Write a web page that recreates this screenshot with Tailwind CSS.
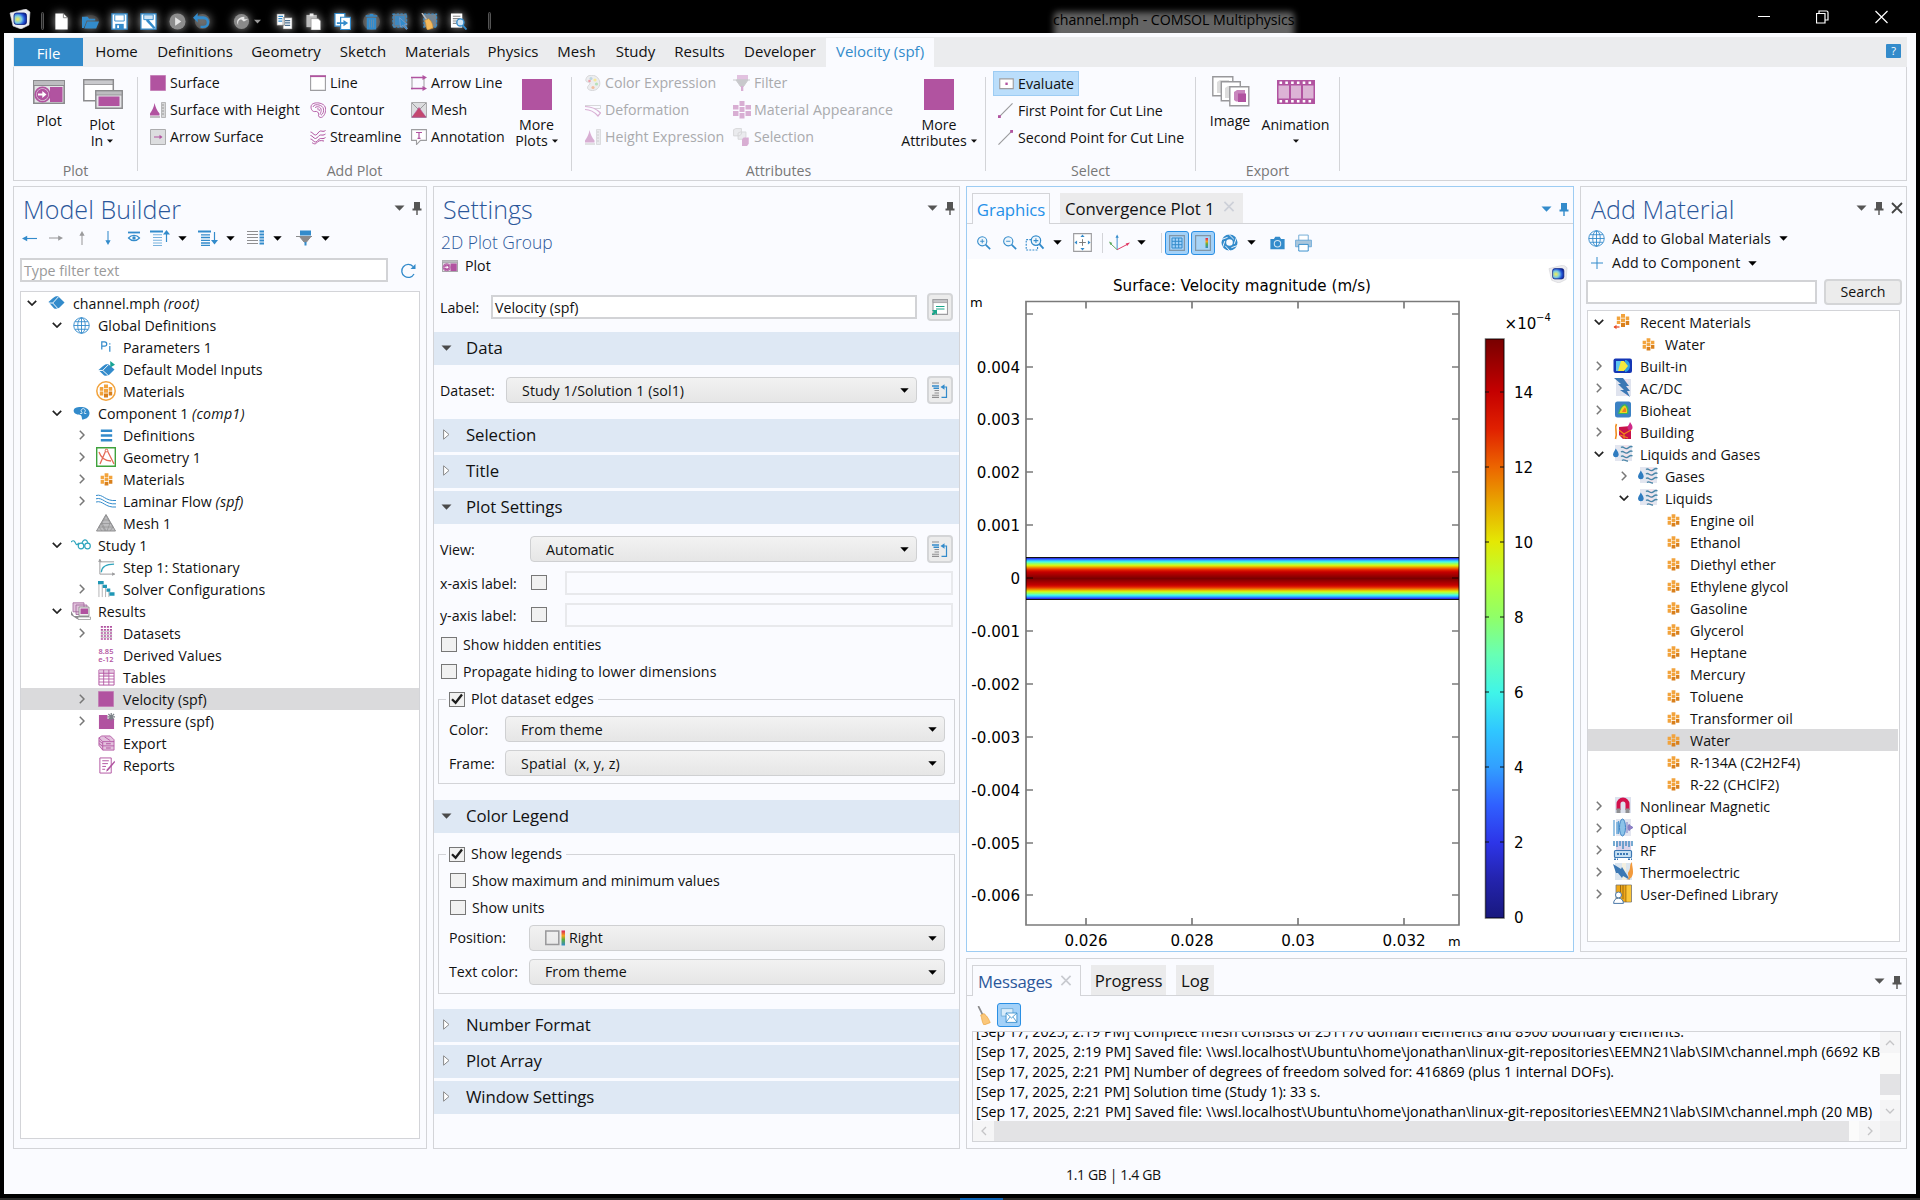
<!DOCTYPE html>
<html lang="en">
<head>
<meta charset="utf-8">
<title>channel.mph - COMSOL Multiphysics</title>
<script src="https://cdn.jsdelivr.net/npm/@tailwindcss/browser@4"></script>
</head>
<body class="bg-black">
<svg class="absolute h-0 w-0" xmlns="http://www.w3.org/2000/svg">
<defs>
<linearGradient id="jet" x1="0" y1="1" x2="0" y2="0"><stop offset="0" stop-color="#18187e"/><stop offset=".07" stop-color="#2424b0"/><stop offset=".13" stop-color="#2d35e8"/><stop offset=".195" stop-color="#3060ff"/><stop offset=".26" stop-color="#329fff"/><stop offset=".325" stop-color="#30c8ff"/><stop offset=".39" stop-color="#40f5e8"/><stop offset=".455" stop-color="#68ffb4"/><stop offset=".52" stop-color="#90ff68"/><stop offset=".585" stop-color="#b8ff38"/><stop offset=".65" stop-color="#e4e804"/><stop offset=".715" stop-color="#e8a800"/><stop offset=".78" stop-color="#ec6400"/><stop offset=".845" stop-color="#e02000"/><stop offset=".91" stop-color="#c40000"/><stop offset="1" stop-color="#780000"/></linearGradient>
<linearGradient id="flowProfile" x1="0" y1="0" x2="0" y2=".5" spreadMethod="reflect"><stop offset="0" stop-color="#18187e"/><stop offset=".068" stop-color="#2d35e8"/><stop offset=".102" stop-color="#3060ff"/><stop offset=".14" stop-color="#329fff"/><stop offset=".178" stop-color="#30c8ff"/><stop offset=".218" stop-color="#40f5e8"/><stop offset=".262" stop-color="#68ffb4"/><stop offset=".306" stop-color="#90ff68"/><stop offset=".356" stop-color="#b8ff38"/><stop offset=".408" stop-color="#e4e804"/><stop offset=".466" stop-color="#e8a800"/><stop offset=".53" stop-color="#ec6400"/><stop offset=".606" stop-color="#e02000"/><stop offset=".698" stop-color="#c40000"/><stop offset="1" stop-color="#7a0000"/></linearGradient>
<linearGradient id="rain" x1="0" y1="0" x2="0" y2="1"><stop offset="0" stop-color="#d81e5b"/><stop offset=".35" stop-color="#f6a11c"/><stop offset=".6" stop-color="#5fae3a"/><stop offset="1" stop-color="#338bcb"/></linearGradient>
<radialGradient id="logoG" cx=".3" cy=".55" r=".75"><stop offset="0" stop-color="#f6ee54"/><stop offset=".4" stop-color="#7ccce0"/><stop offset=".7" stop-color="#2458d8"/><stop offset="1" stop-color="#0b1c8c"/></radialGradient>

<symbol id="dd" viewBox="0 0 10 6"><path d="M0 .4h10L5 5.8z" fill="currentColor"/></symbol>
<symbol id="pin" viewBox="0 0 10 13"><path d="M2 0h6v6.5h1.5v2H5.7V13H4.3V8.500H.5v-2H2z" fill="currentColor"/></symbol>
<symbol id="cross" viewBox="0 0 12 12"><path d="M1 1l10 10M11 1L1 11" stroke="currentColor" stroke-width="1.8" fill="none"/></symbol>
<symbol id="open" viewBox="0 0 10 6"><path d="M.8 .8L5 5l4.200-4.200" stroke="#222" stroke-width="1.700" fill="none"/></symbol>
<symbol id="shut" viewBox="0 0 6 10"><path d="M.8 .8L5 5 .8 9.200" stroke="#777" stroke-width="1.500" fill="none"/></symbol>
<symbol id="check" viewBox="0 0 12 12"><path d="M1 6.200l3.600 3.600L11 1.500" stroke="#1c1c1c" stroke-width="2.300" fill="none"/></symbol>

<symbol id="logo" viewBox="0 0 22 20"><path d="M1 4L17 0l4 3-1 13-8 4-8-3z" fill="#ececef" stroke="#cfcfd3" stroke-width=".6"/><rect x="5" y="4" width="12.500" height="11.500" rx="2.500" fill="url(#logoG)" stroke="#0d1f7c" stroke-width=".8"/></symbol>
<symbol id="doc" viewBox="0 0 18 18"><path d="M2.500.5h8.500l4.500 4.500v12.500h-13z" fill="#fff"/><path d="M11 .5V5h4.500" fill="none" stroke="#777" stroke-width=".9"/></symbol>
<symbol id="folder" viewBox="0 0 18 18"><ellipse cx="9" cy="9" rx="9" ry="7" fill="#555" opacity=".5"/><path d="M0 4h6l1.500 2H14v2H5l-3 8H0zM5.500 9H18l-3 7.500H2.500z" fill="#338bcb"/></symbol>
<symbol id="save" viewBox="0 0 18 18"><path d="M1 1h16v16H1z" fill="#fff" stroke="#338bcb" stroke-width="1.400"/><path d="M4 2h10v6.500H4z" fill="#fff" stroke="#338bcb"/><path d="M4.500 11.500h9V17h-9z" fill="#338bcb"/><path d="M6.500 13h2v3h-2z" fill="#fff"/></symbol>
<symbol id="saveas" viewBox="0 0 18 18"><path d="M1 1h16v16H1z" fill="#fff" stroke="#338bcb" stroke-width="1.300"/><path d="M4 2h10v5H4z" fill="#cfe3f3" stroke="#338bcb"/><path d="M6 8l3-1 7.500 8.500-2 1.500z" fill="#338bcb"/></symbol>
<symbol id="play" viewBox="0 0 18 18"><circle cx="9" cy="9" r="8.500" fill="#8d8d8d"/><path d="M6.500 4.500l6.500 4.500-6.500 4.500z" fill="#e4e4e4"/></symbol>
<symbol id="undo" viewBox="0 0 18 18"><circle cx="10" cy="9" r="8" fill="#777" opacity=".6"/><path d="M5 0v3.500h6a5.800 5.800 0 010 12.500H8v-2.500h3a3.300 3.300 0 000-7H5V10L0 5z" fill="#338bcb"/></symbol>
<symbol id="redo" viewBox="0 0 18 18"><circle cx="9" cy="9" r="8" fill="#8a8a8a"/><path d="M12 4v2.500h4L11.500 9 8.500 6.500C6 7 5 9 5.500 13 3 9 4.500 4.500 12 4z" fill="#e6e6e6"/></symbol>
<symbol id="copy" viewBox="0 0 18 18"><path d="M1 1h8v12H1zM7.500 5h9.500v12H7.500z" fill="#fff" stroke="#666" stroke-width=".6"/><path d="M2.500 3.500h5M2.500 6h4M2.500 8.500h4" stroke="#338bcb" stroke-width="1.300"/><path d="M9.500 8h5.500M9.500 10.500h5.500M9.500 13h5.500" stroke="#4a6f90" stroke-width="1.300"/></symbol>
<symbol id="paste" viewBox="0 0 18 18"><path d="M1.500 2h11v13h-11z" fill="#bcbcbc"/><path d="M5 .5h4v3H5z" fill="#eee"/><path d="M6.500 6H14l2.500 2.500V18h-10z" fill="#fff" stroke="#888" stroke-width=".6"/></symbol>
<symbol id="dup" viewBox="0 0 18 18"><path d="M1 .5h10.500V14H1z" fill="#fff" stroke="#338bcb" stroke-width="1.300"/><path d="M7 4.500h10.500v13H7z" fill="#fff" stroke="#338bcb" stroke-width="1.300"/><path d="M3 9.800h7V7.500l5 3.200-5 3.300v-2.300H3z" fill="#338bcb"/></symbol>
<symbol id="trash" viewBox="0 0 18 18"><ellipse cx="9" cy="9" rx="9" ry="9" fill="#777" opacity=".5"/><path d="M3 2.500h4V1h4v1.500h4V4H3zM4 5h10v12.500H4z" fill="#338bcb"/><path d="M6.800 7v8.500M9 7v8.500M11.200 7v8.500" stroke="#6f8ea8" stroke-width=".8"/></symbol>
<symbol id="marquee" viewBox="0 0 18 18"><path d="M1 1h14.500v14H1z" fill="#6a7a88" stroke="#338bcb" stroke-width="1.200" stroke-dasharray="2.500 1.500"/><path d="M3 3h10.500v10H3z" fill="#3f88bf"/><path d="M8 5l8 7-3 .5 3.500 4-1.500 1-3.500-4.500-2.500 2z" fill="#338bcb" stroke="#aac" stroke-width=".5"/></symbol>
<symbol id="clear" viewBox="0 0 18 18"><path d="M3 1h13.500v14H3z" fill="#758592" stroke="#338bcb" stroke-width="1.200" stroke-dasharray="2.500 1.500"/><path d="M1 0l5 7" stroke="#bbb" stroke-width="1.500"/><path d="M4 8l4-2c5 4 4 8 5 10l-6 2C5 16 6 12 4 8z" fill="#f5b95b" stroke="#c98d2e" stroke-width=".6"/></symbol>
<symbol id="docfind" viewBox="0 0 18 18"><path d="M1 .5h12v15H1z" fill="#fff"/><path d="M3 3.500h8M3 6h8M3 8.500h5M3 11h4" stroke="#8a8a8a" stroke-width="1.200"/><circle cx="11" cy="10" r="3.800" fill="#cfe4f4" stroke="#338bcb" stroke-width="1.500"/><path d="M13.500 13l4 4.500" stroke="#338bcb" stroke-width="2"/></symbol>

<symbol id="plot" viewBox="0 0 32 24"><path d="M.8.8h30.400v22.400H.8z" fill="#e3e3e6" stroke="#8b8b8e" stroke-width="1.600"/><path d="M1 1h30v4.500H1z" fill="#bdbdc0"/><path d="M1 5.500h30" stroke="#8b8b8e"/><path d="M17 7h12.500v15H17z" fill="#b153a0"/><circle cx="9.500" cy="14.500" r="7.200" fill="#e3e3e6" stroke="#b153a0" stroke-width="1.800"/><circle cx="9.500" cy="14.500" r="5.800" fill="#b153a0"/><path d="M5 13.500h4.300V11l4.200 3.500-4.200 3.500v-2.500H5z" fill="#fff"/></symbol>
<symbol id="plotin" viewBox="0 0 40 30"><path d="M.8.8h29.500v21H.8z" fill="#fff" stroke="#8b8b8e" stroke-width="1.500"/><path d="M1 1h29v4.500H1z" fill="#c9c9cc" stroke="#8b8b8e" stroke-width=".8"/><path d="M12.800 11.800h26.400v17.400H12.800z" fill="#e3e3e6" stroke="#8b8b8e" stroke-width="1.500"/><path d="M13 12h26v4H13z" fill="#bdbdc0" stroke="#8b8b8e" stroke-width=".8"/><path d="M15.500 17.500h21V27h-21z" fill="#b153a0"/></symbol>
<symbol id="sq" viewBox="0 0 16 16"><path d="M.5.5h15v15H.5z" fill="#b153a0" stroke="#c27ab4" stroke-width=".8"/></symbol>
<symbol id="height" viewBox="0 0 16 16"><path d="M0 11.500C2 9 4 5 4.500 1 5.500 5 7 9 9.500 11.500v2H0z" fill="#b153a0"/><path d="M0 15h10" stroke="#999" stroke-width="1.200"/><path d="M11.500.5h4v15h-4z" fill="#d6d6d8" stroke="#a9a9ab" stroke-width=".8"/><path d="M12 3h2M12 6h2M12 9h2M12 12h2" stroke="#8a8a8a" stroke-width=".8"/></symbol>
<symbol id="arrsurf" viewBox="0 0 16 16"><path d="M.5.5h15v15H.5z" fill="#dcdddf" stroke="#acacae"/><path d="M4 8h6" stroke="#b153a0" fill="none"/><path d="M9.500 5.800L12.500 8l-3 2.200z" fill="#b153a0"/></symbol>
<symbol id="line" viewBox="0 0 16 16"><path d="M.6 1h14.800v14.400H.6z" fill="#fff" stroke="#9d9da0" stroke-width="1.100"/><path d="M0 1.200h16" stroke="#b153a0" stroke-width="1.800"/></symbol>
<symbol id="contour" viewBox="0 0 16 16"><g fill="none" stroke="#b153a0" stroke-width=".9"><path d="M1 5C1 1 6 .5 9 1s6 2 6.500 5-.5 8-4 9.400c-2 .5-3.500-1-3-3S7 9 5 9.500 1 8 1 5z"/><path d="M3 5c.5-2.500 4-2.600 6-2s4 1.500 4.500 4-.5 5-2.500 6.300M5 5.800C6 4.500 8 4.500 9.500 5.200s2 2.500 1.500 4.500-1 2-1 3M7 7c1.500-.5 2.500 0 2.300 2"/></g></symbol>
<symbol id="stream" viewBox="0 0 16 16"><g fill="none" stroke="#b153a0" stroke-width="1"><path d="M.5 3c2 0 3 3 5 3s3-4 5-4 3 1 5-.5M.5 6.500c2 0 3 3 5 3s3-3.500 5-3.500 3 .5 5-1M.5 10c2 0 3 3 5 3s3-3.500 5-3.500 3 .5 5-1M2 13.500c2 2 4 1.500 5 0s3-2.500 7-1.500" /></g></symbol>
<symbol id="arrline" viewBox="0 0 16 16"><path d="M1 3v11.500M13 3v11.500" stroke="#9d9da0" stroke-width="1"/><path d="M0 2.500h12M0 13.500h12" stroke="#b153a0" stroke-width="1.400"/><path d="M11.500 0L16 2.500 11.500 5zM11.500 11l4.500 2.500-4.500 2.500z" fill="#b153a0"/></symbol>
<symbol id="meshp" viewBox="0 0 16 16"><path d="M.5.5h15v15H.5z" fill="#dcdddf" stroke="#acacae"/><path d="M1 1l14 14M15 1L1 15" stroke="#9a9a9c"/><path d="M8 5.500l7 9.700H1z" fill="#c4486e" stroke="#b153a0" stroke-width=".6"/></symbol>
<symbol id="annot" viewBox="0 0 16 16"><path d="M.6.600h14.800v10.800H9.500l-4 4.200v-4.200H.6z" fill="#fff" stroke="#9d9da0" stroke-width="1.100"/><path d="M5 3.500h6M8 3.500v5.800M6.500 9.300h3" stroke="#b153a0" stroke-width="1.200"/></symbol>
<symbol id="palette" viewBox="0 0 16 16"><path d="M3 1c5-2 10 0 11.500 5s-2 9.500-7 9.500-6-3-4-5 2-3-1-3.500S1 2.500 3 1z" fill="#ddd" stroke="#999" stroke-width=".8"/><circle cx="6" cy="3.500" r="1.500" fill="#7ab"/><circle cx="10" cy="5" r="1.600" fill="#f5d21e"/><circle cx="11.500" cy="9" r="1.600" fill="#69c36b"/><circle cx="8" cy="12.500" r="1.600" fill="#e8742c"/><circle cx="4.500" cy="6" r="1.300" fill="#d34"/></symbol>
<symbol id="deform" viewBox="0 0 16 16"><path d="M0 3.500h15.500v3H9" fill="none" stroke="#999" stroke-width=".8"/><path d="M0 4.500c6 0 11 2 15.500 6.500L13 14C9 9.500 5 7.500 0 7.500" fill="none" stroke="#b153a0" stroke-width="1.200"/></symbol>
<symbol id="filterp" viewBox="0 0 18 18"><path d="M4 1h11v5H4z" fill="#c77ebb"/><path d="M0 6h17M3 6h12l-4.500 6.500h-3z" fill="#8d8d8f" stroke="#8d8d8f"/><path d="M8 12h2.300v5H8z" fill="#b153a0"/></symbol>
<symbol id="cells" viewBox="0 0 18 18"><path d="M6.500 0h5v5h-5zM6.500 6h5v5h-5zM6.500 12h5v5.500h-5zM0 4h5.500v4.500H0zM0 10h5.500v5H0zM12.500 4H18v4.500h-5.500zM12.500 10H18v5h-5.500z" fill="#b153a0"/></symbol>
<symbol id="selp" viewBox="0 0 16 16"><path d="M.5 1.500l2-1h5v5l-2 1.500h-5zM4.500 4.500l2-1h5v5l-2 1.500h-5z" fill="#d8d8da" stroke="#aaa" stroke-width=".8"/><path d="M8 10l1.500-1.500H14V14l-1.500 2H8z" fill="#b153a0"/></symbol>
<symbol id="eval" viewBox="0 0 16 16"><path d="M.8 3h14.400v10.500H.8z" fill="#fff" stroke="#9d9da0" stroke-width="1.200"/><path d="M6.800 7h2.500v2.600H6.800z" fill="#b153a0"/></symbol>
<symbol id="pt1" viewBox="0 0 16 16"><path d="M1.500 14.500L15.500.5" stroke="#9a9a9c" stroke-width="1.200"/><path d="M0 13h3v3H0z" fill="#b153a0"/></symbol>
<symbol id="pt2" viewBox="0 0 16 16"><path d="M.5 15.500L14.500 1.500" stroke="#9a9a9c" stroke-width="1.200"/><path d="M13 0h3v3h-3z" fill="#b153a0"/></symbol>
<symbol id="images" viewBox="0 0 38 31"><g fill="#fff" stroke="#98989b" stroke-width="1.400"><path d="M.8.8h20v19H.8z"/></g><path d="M5 6l3-2h9v4l-8 9H5z" fill="#ddd"/><path d="M9.300 5.800h19v19h-19z" fill="#fff" stroke="#98989b" stroke-width="1.400"/><path d="M13 12l3-2h9v4l-7 8h-5z" fill="#ddd"/><path d="M17.800 10.800h19v19h-19z" fill="#fff" stroke="#98989b" stroke-width="1.400"/><path d="M22 16l3-2h8v9l-2 2.500h-7L22 24z" fill="#c986bd"/><path d="M26 17.500H34v8.500h-8z" fill="#b153a0"/></symbol>
<symbol id="film" viewBox="0 0 38 24"><path d="M0 0h38v24H0z" fill="#b153a0"/><path d="M1.500 5.500h10.500v13H1.500zM14 5.500h10v13H14zM26 5.500h10.500v13H26z" fill="#dcb4d5"/><path d="M2.500 2.800h34M2.500 21.200h34" stroke="#fff" stroke-width="2.400" stroke-dasharray="2.600 3.200"/></symbol>

<symbol id="larr" viewBox="0 0 16 16"><path d="M4 8h12" stroke="currentColor" stroke-width="1.200"/><path d="M0 8l5.500-3v6z" fill="currentColor"/></symbol>
<symbol id="eye" viewBox="0 0 16 16"><path d="M2 2.500h12" stroke="#338bcb" stroke-width="1.800"/><path d="M2.500 8c3-3.600 8-3.600 11 0-3 3.400-8 3.400-11 0z" fill="#fff" stroke="#338bcb" stroke-width="1.200"/><circle cx="8" cy="8" r="1.700" fill="#338bcb"/></symbol>
<symbol id="listup" viewBox="0 0 20 16"><path d="M0 1.500h13" stroke="#338bcb" stroke-width="2"/><path d="M3 4.800h9M3 7.500h9M3 10.300h9M3 13h9M3 15.500h9" stroke="#338bcb" stroke-width="1.100" opacity=".65"/><path d="M16.500 3v9" stroke="#338bcb" stroke-width="1.200"/><path d="M13 4.500L16.500 0 20 4.500z" fill="#338bcb"/></symbol>
<symbol id="listdn" viewBox="0 0 20 16"><path d="M0 1.500h13" stroke="#338bcb" stroke-width="2"/><path d="M3 4.800h9M3 7.500h9M3 10.300h9M3 13h9M3 15.500h9" stroke="#338bcb" stroke-width="1.300"/><path d="M16.500 2v9" stroke="#338bcb" stroke-width="1.200"/><path d="M13 10l3.500 4.500L20 10z" fill="#338bcb"/></symbol>
<symbol id="cols" viewBox="0 0 18 16"><path d="M0 1.500h11M0 4.500h11M0 7.500h11M0 10.500h11M0 13.500h11" stroke="#8e8e90" stroke-width="1.200"/><path d="M12.500 1.500H17M12.500 4.500H17M12.500 7.500H17M12.500 10.500H17M12.500 13.500H17" stroke="#338bcb" stroke-width="1.800"/></symbol>
<symbol id="funnel" viewBox="0 0 16 16"><path d="M4 .5h11v5H4z" fill="#338bcb"/><path d="M0 6.500h16M3.500 6.500h11.500L10.500 12h-2.500z" fill="#8a8a8c" stroke="#8a8a8c"/><path d="M8.500 12h2v3.500h-2z" fill="#338bcb"/></symbol>
<symbol id="refresh" viewBox="0 0 16 16"><path d="M13 3.500A6.500 6.500 0 1014 11" fill="none" stroke="#338bcb" stroke-width="1.300"/><path d="M15.500 1v5h-5z" fill="#338bcb"/></symbol>

<symbol id="root" viewBox="0 0 18 18"><path d="M.5 7.500L5 3.500C7 1.500 9 1 11 1.500L17.500 8 13 12.500c-2 2-4 2.500-6.500 1.800z" fill="#338bcb"/><path d="M11 2L5 8.500l5.500 6M5 8.500H.5" fill="none" stroke="#fff" stroke-width="1"/></symbol>
<symbol id="globe" viewBox="0 0 18 18"><g fill="none" stroke="#338bcb" stroke-width=".95"><circle cx="9" cy="9" r="8.200"/><ellipse cx="9" cy="9" rx="4" ry="8.200"/><path d="M9 .8v16.400M.8 9h16.400M2 5h14M2 13h14"/></g></symbol>
<symbol id="pi" viewBox="0 0 18 18"><path d="M4 11V3h3a2.200 2.200 0 010 4.500H4M12.500 7.500v6M12.500 4.500v1.300" fill="none" stroke="#338bcb" stroke-width="1.300"/></symbol>
<symbol id="dmi" viewBox="0 0 18 18"><path d="M.5 9.500L5 5.500C7 3.500 9 3 11 3.500L17.500 9 13 13.500c-2 2-4 2.500-6.500 1.800z" fill="#338bcb"/><path d="M11 4L5 10l5.500 5M5 10H.5" fill="none" stroke="#fff" stroke-width="1"/><path d="M13 0l5 4-5 3z" fill="#19a394"/></symbol>
<symbol id="mat" viewBox="0 0 18 18"><path d="M7 2.500h4v3.800H7zM7 7h4v3.800H7zM2.800 5h3.500v3.800H2.800zM2.800 9.600h3.500v3.800H2.800zM11.700 5h3.500v3.800h-3.500z" fill="#f2a33c"/><path d="M7 11.600h4v3.800H7zM11.700 9.600h3.500v3.800h-3.500z" fill="#d9801c"/></symbol>
<symbol id="matc" viewBox="0 0 20 20"><circle cx="10" cy="10" r="9.200" fill="#fff" stroke="#f2a33c" stroke-width="1.500"/><path d="M8 3.500h4v3.800H8zM8 8h4v3.800H8zM3.800 6h3.500v3.800H3.800zM3.800 10.600h3.500v3.800H3.800zM12.700 6h3.500v3.800h-3.500z" fill="#f2a33c"/><path d="M8 12.600h4v3.800H8zM12.700 10.600h3.500v3.800h-3.500z" fill="#d9801c"/></symbol>
<symbol id="rmat" viewBox="0 0 20 18"><path d="M8 1h4v3.800H8zM8 5.500h4v3.800H8zM3.800 3.500h3.500v3.800H3.800zM3.800 8.100h3.500v3H3.800zM12.700 3.500h3.500v3.800h-3.500z" fill="#f2a33c"/><path d="M8 10.100h4v3.800H8zM12.700 8.100h3.500v3.800h-3.500z" fill="#d9801c"/><path d="M1 14h5.500" stroke="#e8502c" stroke-width="1.300"/><path d="M.5 14l3-2.200v4.400z" fill="#e8502c"/></symbol>
<symbol id="comp" viewBox="0 0 18 18"><path d="M.8 7C0 3 4 2 8 2c5 0 9.500 2 9.500 6.500 0 3-1.500 4-3 5.500L10 15.500c-1-2-.5-3.500-1.500-4.500S1.800 11 .8 7z" fill="#338bcb"/><path d="M7.500 9h2V7.800a2.200 2.200 0 112.600 0V9h2" fill="none" stroke="#d9ecf9" stroke-width="1"/></symbol>
<symbol id="defs3" viewBox="0 0 18 18"><path d="M3 4h12M3 9h12M3 14h12" stroke="#338bcb" stroke-width="2.600"/></symbol>
<symbol id="geom" viewBox="0 0 20 20"><path d="M.7.7h18.600v18.600H.7z" fill="#fff" stroke="#3fa23c" stroke-width="1.400"/><path d="M10.500 2L4 17M10.500 2L18 17M3 5c2 6 6 9 12 9" fill="none" stroke="#e56a56" stroke-width="1.300"/><circle cx="10.500" cy="3.500" r="1.300" fill="#fff" stroke="#e56a56"/></symbol>
<symbol id="flow" viewBox="0 0 20 16"><g fill="none" stroke="#338bcb" stroke-width="1"><path d="M0 2.500c7-2 9 6 20 5M0 5.800c7-2 9 6 20 5M0 9c7-2 9 6 20 5" /></g></symbol>
<symbol id="meshg" viewBox="0 0 20 18"><path d="M10 .5L19.500 17H.5z" fill="#bdbdbf" stroke="#8f8f91"/><path d="M7 6h6M5 9.500h10M3 13h14M10 1l4 8-3 8M10 1L6 9l4 8M5 9.500L3 13l3 4M15 9.500l2 3.500-3 4M5 9.500L9 17" fill="none" stroke="#8f8f91" stroke-width=".7"/></symbol>
<symbol id="study" viewBox="0 0 20 14"><g fill="none" stroke="#2fa5bd" stroke-width="1.200"><path d="M0 4c3-3 4 0 5 2s2-1 3-1"/><circle cx="10" cy="8" r="2.800"/><circle cx="16.500" cy="8" r="2.800"/><path d="M11 5c1-3 3-4 5-2l1 2"/></g></symbol>
<symbol id="step" viewBox="0 0 18 18"><path d="M2 0v16h16M2 3h15" stroke="#9a9a9c" fill="none"/><path d="M3.500 14C4 8 9 5.500 17 5.500" fill="none" stroke="#2fa5bd" stroke-width="1.300"/><path d="M0 3l2-3 2 3zM15 14l3 2-3 2z" fill="#9a9a9c"/></symbol>
<symbol id="solver" viewBox="0 0 18 18"><path d="M1 1v16M4.500 4v13M8 7v10M11.500 10v7" stroke="#b0b0b2"/><path d="M0 0h6v3.500H0zM5 4h4.500v3.500H5zM9 8h4v3.500H9zM12 12h5.500v3.500H12z" fill="#1f97b5"/></symbol>
<symbol id="results" viewBox="0 0 20 18"><path d="M0 9l3 5h15v3H6L0 13z" fill="#8b8b8e"/><path d="M2 .8h11v9H2zM5 3h11v9.500H5z" fill="#e2c3dd" stroke="#a0629a" stroke-width=".8"/><path d="M8 5h10v9H8z" fill="#eee" stroke="#888" stroke-width=".8"/><path d="M9.500 6.500h7.500V12H9.500z" fill="#b153a0"/><path d="M7 15h12.500v2.500H7z" fill="#fff" stroke="#999" stroke-width=".8"/></symbol>
<symbol id="dsets" viewBox="0 0 18 18"><path d="M3 2h12" stroke="#b153a0" stroke-width="2" stroke-dasharray="2.200 1"/><path d="M3 5.200h12M3 8.400h12M3 11.600h12M3 14.800h12" stroke="#b153a0" stroke-width="1.700" stroke-dasharray="2.200 1"/><path d="M3 6.800h12M3 10h12M3 13.200h12" stroke="#8b8b8e" stroke-width=".8" opacity=".6"/></symbol>
<symbol id="table" viewBox="0 0 18 18"><path d="M1 1h16v16H1z" fill="#fff" stroke="#b153a0"/><path d="M1 1h16v4H1zM6 1h5v7H6z" fill="#dcb4d5" opacity=".7"/><path d="M1 4.500h16M1 7.500h16M1 10.600h16M1 13.800h16M6 1v16M11.500 1v16" stroke="#b153a0" stroke-width=".9"/></symbol>
<symbol id="press" viewBox="0 0 18 18"><path d="M1 2h9v4h7v11H1z" fill="#b153a0"/><path d="M10 4h8M14 0v8M11 1l6 6M17 1l-6 6" stroke="#7d8288" stroke-width="1.300"/></symbol>
<symbol id="exportp" viewBox="0 0 18 18"><path d="M1 3l3-2h9l4 4v11H5l-4-5z" fill="#e3c0dd" stroke="#b153a0" stroke-width=".9"/><path d="M1 6l4 3M1 9l4 3M5 16V7L1 3M5 7h12M5 11.500h12M7 2l6 4" fill="none" stroke="#b153a0" stroke-width=".9"/><path d="M8.500 9.300h5M8.500 13.800h5" stroke="#b153a0" stroke-width="1.200"/></symbol>
<symbol id="report" viewBox="0 0 18 18"><path d="M2 1h12v16H2z" fill="#fff" stroke="#b153a0"/><path d="M4.500 4h7M4.500 7h6M4.500 10h4M4.500 13h3" stroke="#b153a0"/><path d="M17.500 4l-8 9-1 2.500L11 14l7-8.500z" fill="#b153a0"/></symbol>

<symbol id="goto" viewBox="0 0 16 16"><path d="M1 .6h14.500v14.800H1z" fill="#fff" stroke="#9d9da0" stroke-width="1.100"/><path d="M1 .6h14.500v3H1z" fill="#c6c6c9" stroke="#9d9da0" stroke-width=".8"/><path d="M4 7.500h8.500M4 10h8.500" stroke="#1aa58a" stroke-width="1.200"/><path d="M0 11h5v5L3.500 14.500 1.500 16H0v-1.500L1.700 13z" fill="#1aa58a"/></symbol>
<symbol id="src" viewBox="0 0 16 16"><path d="M0 1h7M2.500 8.500H7M2.500 11H7M0 13.200h7M0 15.400h7" stroke="#8e8e90" stroke-width="1.100"/><path d="M0 4h7M1.500 6.200h5.500" stroke="#338bcb" stroke-width="1.400"/><path d="M9.500 15.300h5V5H11" fill="none" stroke="#338bcb" stroke-width="1.200"/><path d="M12.500 2.200L8.500 5l4 2.800z" fill="#338bcb"/></symbol>

<symbol id="zin" viewBox="0 0 18 18"><circle cx="7.500" cy="7.500" r="5.500" fill="#eef6fc" stroke="#338bcb" stroke-width="1.300"/><path d="M11.500 11.500L17 17" stroke="#338bcb" stroke-width="2"/><path d="M5 7.500h5M7.500 5v5" stroke="#338bcb" stroke-width="1.100"/></symbol>
<symbol id="zout" viewBox="0 0 18 18"><circle cx="7.500" cy="7.500" r="5.500" fill="#eef6fc" stroke="#338bcb" stroke-width="1.300"/><path d="M11.500 11.500L17 17" stroke="#338bcb" stroke-width="2"/><path d="M5 7.500h5" stroke="#338bcb" stroke-width="1.100"/></symbol>
<symbol id="zbox" viewBox="0 0 20 18"><path d="M.7 6h12v11H.7z" fill="none" stroke="#338bcb" stroke-width="1.200" stroke-dasharray="2 1.300"/><circle cx="11" cy="7" r="5" fill="#eef6fc" stroke="#338bcb" stroke-width="1.300"/><path d="M14.500 10.500l4.500 5" stroke="#338bcb" stroke-width="2"/><path d="M8.500 7h5M11 4.500v5" stroke="#338bcb" stroke-width="1.100"/></symbol>
<symbol id="ext" viewBox="0 0 20 20"><path d="M.7.7h18.600v18.600H.7z" fill="#fff" stroke="#9d9da0" stroke-width="1.200"/><path d="M10 6.500v7M6.500 10h7" stroke="#777"/><path d="M10 1.500l2.200 2.800H7.800zM10 18.500l2.200-2.800H7.800zM1.500 10l2.800-2.200v4.400zM18.500 10l-2.800-2.200v4.400z" fill="#338bcb"/></symbol>
<symbol id="axes" viewBox="0 0 22 18"><path d="M8.500 16V2.500" stroke="#338bcb" stroke-width="1"/><path d="M8.500 0l1.700 3.500H6.800z" fill="#338bcb"/><path d="M8.500 16L2 10" stroke="#5aa85a" stroke-width="1"/><path d="M0 7.500l3.500 1.500L1.500 11.200z" fill="#5aa85a"/><path d="M8.500 16L19 10.500" stroke="#e0335f" stroke-width="1"/><path d="M22 8.500l-3 3.700-1.500-2.800z" fill="#e0335f"/></symbol>
<symbol id="grid" viewBox="0 0 16 16"><path d="M.6.600h14.800v14.800H.6z" fill="none" stroke="#8096a8" stroke-width="1.200"/><path d="M3 3h10v10H3zM6.300 3v10M9.700 3v10M3 6.300h10M3 9.700h10" fill="none" stroke="#338bcb" stroke-width="1"/></symbol>
<symbol id="legend" viewBox="0 0 16 16"><path d="M.6.600h14.800v14.800H.6z" fill="#a9d4f6" stroke="#8096a8" stroke-width="1.200"/><path d="M10.500 3H13v10h-2.500z" fill="url(#rain)"/></symbol>
<symbol id="aperture" viewBox="0 0 18 18"><circle cx="9" cy="9" r="6" fill="none" stroke="#338bcb" stroke-width="5"/><path d="M8 0l5.500 5.500M16.500 3.500L14 10.500M18 12l-7 2.500M9.500 18L4.500 12.500M1.500 14.500L4 7.500M0 6l7-2.500" stroke="#fafbff" stroke-width="1"/></symbol>
<symbol id="cam" viewBox="0 0 18 18"><path d="M1 4.500h4l1.500-2.500h5L13 4.500h4V16H1z" fill="#338bcb"/><circle cx="9" cy="9.800" r="3.600" fill="#338bcb" stroke="#cfe3f3" stroke-width="1.200"/></symbol>
<symbol id="printer" viewBox="0 0 18 18"><path d="M4 .6h10V7H4z" fill="#fff" stroke="#6fa9d4"/><path d="M.6 6h16.800v7H.6z" fill="#a9c6dc" stroke="#5a9fd4" stroke-width=".8"/><path d="M4 10.500h10v7H4z" fill="#fff" stroke="#338bcb"/></symbol>
<symbol id="broom" viewBox="0 0 14 20"><path d="M1 0l4.500 9" stroke="#8a8a8c" stroke-width="1.800"/><path d="M3.500 9.500L7 8c4 3 5.500 7 6.500 9.500L7 20C4.500 17 5 13 3.500 9.500z" fill="#fbc77a" stroke="#e8a33f" stroke-width=".7"/></symbol>
<symbol id="mail" viewBox="0 0 20 18"><path d="M.7.7h14v9H.7z" fill="#d9ecfa" stroke="#6fa9d4"/><path d="M6.500 6h13v11.300h-13z" fill="#fff" stroke="#338bcb"/><path d="M6.500 6l6.500 6 6.500-6M6.500 17l4.500-6M19.500 17l-4.500-6" fill="none" stroke="#338bcb"/></symbol>

<symbol id="builtin" viewBox="0 0 20 16"><rect x=".5" y=".5" width="18.500" height="14.500" rx="2" fill="#1537b5"/><path d="M3 3h7v10H3z" fill="#5fc6ee"/><path d="M12 2c6 0 7 11 0 12z" fill="#2fa0e0"/><path d="M8 3h3l4 5-4 5H5z" fill="#f4e93c"/></symbol>
<symbol id="acdc" viewBox="0 0 20 20"><path d="M3 1h15v17H3z" fill="#dfe3ee"/><path d="M12 1h3v17h-3z" fill="#f0e0ea"/><path d="M1 0h9l6 8h-3l4 5h-3l3 6-10-7h4L5 6h3z" fill="#3c78b4"/></symbol>
<symbol id="bio" viewBox="0 0 20 20"><rect x="2" y="1.500" width="16" height="16" rx="2.500" fill="#3c82c4"/><path d="M5 14C6 9 8 5 12 4c4 2 4 7 3 10z" fill="#3cb65a"/><path d="M6.500 13c1-4 3-7 5.500-7.500 2 2 2.500 5 2 7.500z" fill="#f3d321"/><path d="M9 12c1-2 2-4 3-4.500 1 1 1.500 3 1 4.500z" fill="#ee7a22"/></symbol>
<symbol id="build" viewBox="0 0 20 20"><path d="M3.500 2C1 6 5 10 2.500 17" fill="none" stroke="#f08a1c" stroke-width="1.600"/><path d="M6 5l12-1v13H10L6 13z" fill="#c8124a"/><path d="M6 8l5 4 7-4M11 12v5M7 13l8 3" stroke="#f08a1c" stroke-width="1.100" fill="none"/><path d="M17 0c2 3 2.500 4 2.500 5.500a2.500 2.500 0 01-5 0C14.500 4 16 3 17 0z" fill="#cf2a88"/></symbol>
<symbol id="liq" viewBox="0 0 20 20"><path d="M2 1h17v16H2z" fill="#e3e6f0"/><path d="M11 1h4v16h-4z" fill="#f3e3ea"/><path d="M2.800 4.500C5 8 5.700 9 5.700 11a2.900 2.900 0 01-5.700 0c0-2 1-3 2.800-6.500z" fill="#2f7cc0"/><g fill="none" stroke="#4a86a8" stroke-width="1.400"><path d="M8 3.500c2.500-2 3.500 2 6 1s3-3 5.500-1.500M8 8c2.500-2 3.500 2 6 1s3-3 5.500-1.500M8 12.500c2.500-2 3.500 2 6 1s3-3 5.500-1.500M9 16.500c2.500-2 3.500 1 6 .5" /></g></symbol>
<symbol id="magnet" viewBox="0 0 20 20"><path d="M2 1h16v16H2z" fill="#dde2ee"/><path d="M3.500 14V8a6.500 6.500 0 0113 0v6h-4V8a2.500 2.500 0 00-5 0v6z" fill="#d3114c"/><path d="M3.500 12.500h4V17h-4zM12.500 12.500h4V17h-4z" fill="#8f8f92"/></symbol>
<symbol id="optic" viewBox="0 0 20 20"><path d="M3 1h15v17H3z" fill="#e3e6f0"/><path d="M1 2v16M4 4v12M5.500 3v13" stroke="#5a9fd4" stroke-width="1.200"/><ellipse cx="9.500" cy="9.500" rx="3" ry="8.500" fill="#8cc3e8" stroke="#3c82c4"/><path d="M14 4v11M16.500 6c-2 2-2 5 0 7M20 9.500l-4-2.500v5z" fill="#9b7fc4" stroke="#7f7fc4"/></symbol>
<symbol id="rf" viewBox="0 0 20 20"><path d="M3 1h15v9H3z" fill="#dcd4ea"/><path d="M1 1v5M4 1v6M7 1v5M10 1v8M13 1v5M16 1v6M19 1v5" stroke="#4a90c4" stroke-width="1.500"/><rect x="1.500" y="10.500" width="17" height="7" rx="1" fill="#c6dff2" stroke="#3c78b4" stroke-width="1.200"/><path d="M4 14h12M1 19.500h4M15 19.500h4" stroke="#3c78b4" stroke-width="1.800" stroke-dasharray="2 1"/></symbol>
<symbol id="thermo" viewBox="0 0 20 20"><path d="M2 1h17v17H2z" fill="#dbe5ee"/><path d="M9 1h4v17H9z" fill="#f3efe0"/><path d="M0 2l8 5 1-2 5 8 3 5-7-4-1 2-4-5H3z" fill="#3c78b4"/><path d="M14 18c4-3-1-6 2-9 2-3 0-6 3-9 0 4 1 6 1 10s-2 7-6 8z" fill="#f29a3c"/></symbol>
<symbol id="userlib" viewBox="0 0 20 20"><path d="M3 1h15.500v17H3z" fill="#f0a818" stroke="#777" stroke-width=".8"/><path d="M7.500 1v10M13 1v17M10 1v14" stroke="#9a6a10" stroke-width="1"/><path d="M13.500 1.500H18v16h-4.500z" fill="#fbc63a"/><circle cx="5.500" cy="11" r="3" fill="#fff" stroke="#4a78a8"/><path d="M.6 19.400c0-7 9.800-7 9.800 0z" fill="#fff" stroke="#4a78a8"/></symbol>
</defs>
</svg>

<div class="flex h-[1200px] w-[1920px] flex-col overflow-hidden bg-black font-['Open_Sans','Noto_Sans',sans-serif] text-[14.2px] leading-[22px] whitespace-nowrap text-[#111]">

  <!-- Title bar -->
  <header class="relative flex h-[33px] shrink-0 items-start overflow-hidden">
    <svg class="mt-[9px] ml-[9px] h-5 w-[22px]"><use href="#logo"/></svg>
    <div class="mt-3 ml-[10px] h-[18px] w-[3px] rounded border border-[#555] bg-[#222]"></div>
    <div class="mt-[13px] ml-[9px] flex h-[18px] text-[#777] *:h-[17px] *:w-[17px] *:drop-shadow-[0_0_5px_rgba(255,255,255,0.65)]">
      <svg><use href="#doc"/></svg>
      <svg class="ml-3"><use href="#folder"/></svg>
      <svg class="ml-3"><use href="#save"/></svg>
      <svg class="ml-3"><use href="#saveas"/></svg>
      <svg class="ml-3"><use href="#play"/></svg>
      <svg class="ml-[7px]"><use href="#undo"/></svg>
      <svg class="ml-[23px]"><use href="#redo"/></svg>
    </div>
    <svg class="mt-[19px] ml-1 h-[5px] w-[7px] text-[#999]"><use href="#dd"/></svg>
    <div class="mt-[13px] ml-[15px] flex h-[18px] gap-3 *:h-[17px] *:w-[17px] *:drop-shadow-[0_0_5px_rgba(255,255,255,0.65)]">
      <svg><use href="#copy"/></svg><svg><use href="#paste"/></svg><svg><use href="#dup"/></svg><svg><use href="#trash"/></svg><svg><use href="#marquee"/></svg><svg><use href="#clear"/></svg><svg><use href="#docfind"/></svg>
    </div>
    <div class="mt-3 ml-[21px] h-[18px] w-[3px] rounded border border-[#555] bg-[#222]"></div>
    <div class="absolute top-[12px] left-[1054px] h-[30px] w-[240px] rounded bg-[#646464] blur-[3px]"></div>
    <div class="absolute top-[9px] left-[1053px] text-[14.2px] tracking-[-0.05px] text-black">channel.mph - COMSOL Multiphysics</div>
    <div class="absolute top-[10px] left-[1758px] flex text-white">
      <svg class="h-[14px] w-[14px]" viewBox="0 0 14 14"><path d="M0 6.500h12" stroke="#fff"/></svg>
      <svg class="ml-[44px] h-[14px] w-[14px]" viewBox="0 0 14 14"><path d="M.5 3.500h8.500v9.500H.5zM3 3V1h7.500q1.500 0 1.500 1.500V10H9.500" fill="none" stroke="#fff" stroke-width="1.200"/></svg>
      <svg class="ml-[45px] h-[14px] w-[14px]" viewBox="0 0 14 14"><path d="M.5 1l12 12M12.500 1l-12 12" stroke="#fff" stroke-width="1.200"/></svg>
    </div>
  </header>

  <main class="ml-1 flex h-[1161px] w-[1912px] shrink-0 flex-col bg-[#fafbff] px-[9px] pt-1">

    <!-- Ribbon tabs -->
    <nav class="flex h-[30px] shrink-0 bg-[#ebecee] pl-px text-[15px] leading-[29px] *:text-center">
      <div class="mt-px mr-[2px] h-7 w-[69px] bg-[#338bcb] leading-[31px] text-white">File</div>
      <div class="w-[63px]">Home</div><div class="w-[94px]">Definitions</div><div class="w-[88px]">Geometry</div><div class="w-[66px]">Sketch</div><div class="w-[83px]">Materials</div><div class="w-[68px]">Physics</div><div class="w-[59px]">Mesh</div><div class="w-[59px]">Study</div><div class="w-[69px]">Results</div><div class="w-[92px]">Developer</div>
      <div class="mt-px w-[108px] bg-[#fafbff] leading-[27px] text-[#338bcb]">Velocity (spf)</div>
      <div class="mt-[7px] mr-[6px] ml-auto h-[14px] w-[15px] rounded-[1px] bg-[#338bcb] text-[11px] leading-[14px] text-white">?</div>
    </nav>

    <!-- Ribbon -->
    <section class="flex h-[114px] shrink-0 border border-t-0 border-[#d3d4d8]">
      <div class="flex w-[123px] flex-col">
        <div class="flex h-[94px]">
          <div class="flex w-[70px] flex-col items-center pt-[13px]"><svg class="mb-[6px] h-6 w-8"><use href="#plot"/></svg>Plot</div>
          <div class="flex w-[36px] flex-col items-center pt-[12px] leading-[16px]"><svg class="mb-[8px] h-[30px] w-10 translate-x-px"><use href="#plotin"/></svg>Plot<span class="flex items-center gap-1">In <svg class="h-1 w-[6px]"><use href="#dd"/></svg></span></div>
        </div>
        <div class="h-5 text-center leading-[22px] text-[#777]">Plot</div>
      </div>
      <div class="mt-[10px] h-[94px] w-px bg-[#d3d4d8]"></div>

      <div class="flex w-[433px] flex-col">
        <div class="flex h-[94px] pt-[2px] pl-3">
          <div class="w-[160px] *:flex *:h-[27px] *:items-center *:gap-1 [&_svg]:h-4 [&_svg]:w-4"><div><svg><use href="#sq"/></svg>Surface</div><div class="tracking-[0.05px]"><svg><use href="#height"/></svg>Surface with Height</div><div><svg><use href="#arrsurf"/></svg>Arrow Surface</div></div>
          <div class="w-[101px] *:flex *:h-[27px] *:items-center *:gap-1 [&_svg]:h-4 [&_svg]:w-4"><div><svg><use href="#line"/></svg>Line</div><div><svg><use href="#contour"/></svg>Contour</div><div><svg><use href="#stream"/></svg>Streamline</div></div>
          <div class="w-[99px] *:flex *:h-[27px] *:items-center *:gap-1 [&_svg]:h-4 [&_svg]:w-4"><div><svg><use href="#arrline"/></svg>Arrow Line</div><div><svg><use href="#meshp"/></svg>Mesh</div><div><svg><use href="#annot"/></svg>Annotation</div></div>
          <div class="flex w-[53px] flex-col items-center pt-[10px] leading-[16px]"><div class="mb-[7px] h-[31px] w-[30px] bg-[#b153a0]"></div>More<span class="flex items-center gap-1">Plots <svg class="h-1 w-[6px]"><use href="#dd"/></svg></span></div>
        </div>
        <div class="h-5 text-center leading-[22px] text-[#777]">Add Plot</div>
      </div>
      <div class="mt-[10px] h-[94px] w-px bg-[#d3d4d8]"></div>

      <div class="flex w-[413px] flex-col">
        <div class="flex h-[94px] pt-[2px] pl-[13px]">
          <div class="w-[148px] text-[#a9aaad] *:flex *:h-[27px] *:items-center *:gap-1 [&_svg]:h-4 [&_svg]:w-4 [&_svg]:opacity-45"><div><svg><use href="#palette"/></svg>Color Expression</div><div><svg><use href="#deform"/></svg>Deformation</div><div><svg><use href="#height"/></svg>Height Expression</div></div>
          <div class="w-[165px] text-[#a9aaad] *:flex *:h-[27px] *:items-center *:gap-[3px] [&_svg]:h-[18px] [&_svg]:w-[18px] [&_svg]:opacity-45"><div><svg><use href="#filterp"/></svg>Filter</div><div class="tracking-[0.08px]"><svg><use href="#cells"/></svg>Material Appearance</div><div><svg><use href="#selp"/></svg>Selection</div></div>
          <div class="flex w-[82px] flex-col items-center pt-[10px] leading-[16px]"><div class="mb-[7px] h-[31px] w-[30px] bg-[#b153a0]"></div>More<span class="flex items-center gap-1">Attributes <svg class="h-1 w-[6px]"><use href="#dd"/></svg></span></div>
        </div>
        <div class="h-5 text-center leading-[22px] text-[#777]">Attributes</div>
      </div>
      <div class="mt-[10px] h-[94px] w-px bg-[#d3d4d8]"></div>

      <div class="flex w-[209px] flex-col">
        <div class="h-[94px] pt-1 pl-[7px] *:flex *:items-center *:gap-[4px] *:pl-[5px] [&_svg]:h-[15px] [&_svg]:w-[15px]">
          <div class="h-[25px] w-[86px] border border-[#9dccf3] bg-[#bbdefb]"><svg><use href="#eval"/></svg>Evaluate</div>
          <div class="mt-px h-[27px] gap-[5px]!"><svg><use href="#pt1"/></svg><span class="tracking-[-0.1px]">First Point for Cut Line</span></div>
          <div class="h-[27px] gap-[5px]!"><svg><use href="#pt2"/></svg><span class="tracking-[-0.04px]">Second Point for Cut Line</span></div>
        </div>
        <div class="h-5 text-center leading-[22px] text-[#777]">Select</div>
      </div>
      <div class="mt-[10px] h-[94px] w-px bg-[#d3d4d8]"></div>

      <div class="flex w-[143px] flex-col">
        <div class="flex h-[94px] pl-[3px]">
          <div class="flex w-[62px] flex-col items-center pt-[9px]"><svg class="mb-[3px] h-[31px] w-[38px] translate-x-px"><use href="#images"/></svg>Image</div>
          <div class="flex w-[69px] flex-col items-center pt-[13px] leading-[16px]"><svg class="mb-[13px] h-6 w-[38px]"><use href="#film"/></svg>Animation<svg class="mt-[6px] h-1 w-[6px]"><use href="#dd"/></svg></div>
        </div>
        <div class="h-5 text-center leading-[22px] text-[#777]">Export</div>
      </div>
      <div class="mt-[10px] h-[94px] w-px bg-[#d3d4d8]"></div>
    </section>

    <!-- Workspace -->
    <div class="mt-[5px] flex h-[963px] shrink-0">

      <!-- Model Builder -->
      <section class="w-[414px] shrink-0 border border-[#d3d4d8] pl-[6px]">
        <div class="flex h-[42px] items-center">
          <h2 class="ml-[3px] w-[371px] pt-[1px] text-[25px] font-light tracking-[0.08px] text-[#2b579a]">Model Builder</h2>
          <svg class="mb-px h-[6px] w-[11px] text-[#555]"><use href="#dd"/></svg>
          <svg class="ml-[7px] h-[13px] w-[10px] text-[#555]"><use href="#pin"/></svg>
        </div>
        <div class="flex h-[18px] items-center pl-[2px] text-[#338bcb]">
          <svg class="h-[15px] w-[15px]"><use href="#larr"/></svg>
          <svg class="ml-3 h-[14px] w-[14px] rotate-180 text-[#9a9a9c]"><use href="#larr"/></svg>
          <svg class="ml-[12px] h-[14px] w-[14px] rotate-90 text-[#9a9a9c]"><use href="#larr"/></svg>
          <svg class="ml-3 h-[14px] w-[14px] -rotate-90"><use href="#larr"/></svg>
          <svg class="ml-[11px] h-4 w-4"><use href="#eye"/></svg>
          <svg class="ml-[8px] h-4 w-5"><use href="#listup"/></svg>
          <svg class="ml-2 h-[5px] w-[9px] text-black"><use href="#dd"/></svg>
          <svg class="ml-[11px] h-4 w-5"><use href="#listdn"/></svg>
          <svg class="ml-2 h-[5px] w-[9px] text-black"><use href="#dd"/></svg>
          <svg class="ml-3 h-4 w-[18px]"><use href="#cols"/></svg>
          <svg class="ml-[8px] h-[5px] w-[9px] text-black"><use href="#dd"/></svg>
          <svg class="ml-[14px] h-4 w-4"><use href="#funnel"/></svg>
          <svg class="ml-[9px] h-[5px] w-[9px] text-black"><use href="#dd"/></svg>
        </div>
        <div class="mt-[11px] flex items-center">
          <div class="h-6 w-[368px] border-2 border-[#d2d3d6] bg-white pl-[2px] leading-[22px] text-[#999]">Type filter text</div>
          <svg class="ml-3 h-4 w-4 translate-y-px"><use href="#refresh"/></svg>
        </div>
        <div id="model-tree" class="mt-[9px] h-[848px] w-[400px] border border-[#d3d4d8] bg-white"></div>
      </section>

      <!-- Settings -->
      <section class="ml-[6px] w-[527px] shrink-0 border border-[#d3d4d8]">
        <div class="flex h-[42px] items-center pl-[9px]">
          <h2 class="w-[484px] pt-[1px] text-[25px] font-light tracking-[0.08px] text-[#2b579a]">Settings</h2>
          <svg class="mb-px h-[6px] w-[11px] text-[#555]"><use href="#dd"/></svg>
          <svg class="ml-[7px] h-[13px] w-[10px] text-[#555]"><use href="#pin"/></svg>
        </div>
        <div class="h-[26px] pl-[7px] text-[17.4px] leading-[27px] font-light text-[#2b579a]">2D Plot Group</div>
        <div class="flex h-[20px] items-center gap-[7px] pt-px pl-[8px]"><svg class="h-3 w-4"><use href="#plot"/></svg>Plot</div>
        <div class="mt-[18px] flex h-[28px] items-center pl-[6px]">
          <span class="w-[51px] pt-px">Label:</span>
          <div class="h-6 w-[426px] border-2 border-[#d2d3d6] bg-white pl-[2px] leading-[22px]">Velocity (spf)</div>
          <div class="ml-[10px] flex h-7 w-[26px] items-center justify-center rounded border-2 border-[#d4d5d7] bg-[#ececec]"><svg class="h-4 w-4"><use href="#goto"/></svg></div>
        </div>
        <div class="mt-[11px] flex h-[33px] items-center bg-[#dee8f4] pb-[2px] pl-[7px] text-[16.8px]"><svg class="mr-[14px] h-[6px] w-[11px] text-[#4a4a4a]"><use href="#dd"/></svg>Data</div>
        <div class="mt-[11px] flex h-[28px] items-center pl-[6px]">
          <span class="w-[66px] pt-px">Dataset:</span>
          <div class="flex h-[26px] w-[411px] items-center justify-between rounded border border-[#cfd0d2] bg-gradient-to-b from-[#f2f2f2] to-[#e6e6e6] pt-px pr-[7px] pl-[15px] tracking-[0.1px]">Study 1/Solution 1 (sol1)<svg class="h-[5px] w-[9px] text-black"><use href="#dd"/></svg></div>
          <div class="ml-[10px] flex h-7 w-[26px] items-center justify-center rounded border-2 border-[#d4d5d7] bg-[#ececec]"><svg class="h-4 w-4"><use href="#src"/></svg></div>
        </div>
        <div class="mt-[15px] flex h-[33px] items-center bg-[#dee8f4] pb-[2px] pl-[9px] text-[16.8px] tracking-[-0.08px]"><svg class="mr-[16px] h-[11px] w-[7px]" viewBox="0 0 7 11"><path d="M.6.8L6 5.500.6 10.200z" fill="#fff" stroke="#8a8a8a"/></svg>Selection</div>
        <div class="mt-[3px] flex h-[33px] items-center bg-[#dee8f4] pb-[2px] pl-[9px] text-[16.8px]"><svg class="mr-[16px] h-[11px] w-[7px]" viewBox="0 0 7 11"><path d="M.6.8L6 5.500.6 10.200z" fill="#fff" stroke="#8a8a8a"/></svg>Title</div>
        <div class="mt-[3px] flex h-[33px] items-center bg-[#dee8f4] pb-[2px] pl-[7px] text-[16.8px] tracking-[-0.05px]"><svg class="mr-[14px] h-[6px] w-[11px] text-[#4a4a4a]"><use href="#dd"/></svg>Plot Settings</div>
        <div class="mt-[11px] flex h-[28px] items-center pl-[6px]">
          <span class="w-[90px] pt-px">View:</span>
          <div class="flex h-[26px] w-[387px] items-center justify-between rounded border border-[#cfd0d2] bg-gradient-to-b from-[#f2f2f2] to-[#e6e6e6] pt-px pr-[7px] pl-[15px] tracking-[0.05px]">Automatic<svg class="h-[5px] w-[9px] text-black"><use href="#dd"/></svg></div>
          <div class="ml-[10px] flex h-7 w-[26px] items-center justify-center rounded border-2 border-[#d4d5d7] bg-[#ececec]"><svg class="h-4 w-4"><use href="#src"/></svg></div>
        </div>
        <div class="mt-[8px] flex h-6 items-center pl-[6px]"><span class="w-[91px] pt-px">x-axis label:</span><div class="mb-px h-[15px] w-4 border border-[#777] bg-[#f1f1f1]"></div><div class="ml-[18px] h-6 w-[388px] border-2 border-[#e8e9ec]"></div></div>
        <div class="mt-[8px] flex h-6 items-center pl-[6px]"><span class="w-[91px] pt-px">y-axis label:</span><div class="mb-px h-[15px] w-4 border border-[#777] bg-[#f1f1f1]"></div><div class="ml-[18px] h-6 w-[388px] border-2 border-[#e8e9ec]"></div></div>
        <div class="mt-[4px] flex h-[27px] items-center gap-[6px] pl-[7px]"><div class="h-[15px] w-4 border border-[#777] bg-[#f1f1f1]"></div>Show hidden entities</div>
        <div class="flex h-[27px] items-center gap-[6px] pl-[7px] tracking-[0.08px]"><div class="h-[15px] w-4 border border-[#777] bg-[#f1f1f1]"></div>Propagate hiding to lower dimensions</div>
        <fieldset class="mx-1 mt-px h-[98px] border border-[#d3d4d8] px-[9px]">
          <legend class="-ml-[2px] flex h-[26px] items-center gap-[6px] px-[3px] pr-1 tracking-[0.08px]"><div class="flex h-[15px] w-4 items-center justify-center border border-[#777] bg-[#f1f1f1]"><svg class="h-3 w-3"><use href="#check"/></svg></div>Plot dataset edges</legend>
          <div class="mt-[4px] flex items-center pl-px"><span class="w-[56px] pt-px">Color:</span><div class="flex h-[26px] w-[440px] items-center justify-between rounded border border-[#cfd0d2] bg-gradient-to-b from-[#f2f2f2] to-[#e6e6e6] pt-px pr-[7px] pl-[15px] tracking-[0.05px]">From theme<svg class="h-[5px] w-[9px] text-black"><use href="#dd"/></svg></div></div>
          <div class="mt-2 flex items-center pl-px"><span class="w-[56px] pt-px">Frame:</span><div class="flex h-[26px] w-[440px] items-center justify-between rounded border border-[#cfd0d2] bg-gradient-to-b from-[#f2f2f2] to-[#e6e6e6] pt-px pr-[7px] pl-[15px]"><span class="tracking-[0.15px]">Spatial&nbsp; (x, y, z)</span><svg class="h-[5px] w-[9px] text-black"><use href="#dd"/></svg></div></div>
        </fieldset>
        <div class="mt-[16px] flex h-[33px] items-center bg-[#dee8f4] pb-[2px] pl-[7px] text-[16.8px] tracking-[-0.05px]"><svg class="mr-[14px] h-[6px] w-[11px] text-[#4a4a4a]"><use href="#dd"/></svg>Color Legend</div>
        <fieldset class="mx-1 mt-[8px] h-[153px] border border-[#d3d4d8] px-[9px]">
          <legend class="-ml-[2px] flex h-[26px] items-center gap-[6px] px-[3px] pr-1"><div class="flex h-[15px] w-4 items-center justify-center border border-[#777] bg-[#f1f1f1]"><svg class="h-3 w-3"><use href="#check"/></svg></div>Show legends</legend>
          <div class="flex h-[27px] items-center gap-[6px] pl-[2px] tracking-[-0.04px]"><div class="h-[15px] w-4 border border-[#777] bg-[#f1f1f1]"></div>Show maximum and minimum values</div>
          <div class="flex h-[27px] items-center gap-[6px] pl-[2px]"><div class="h-[15px] w-4 border border-[#777] bg-[#f1f1f1]"></div>Show units</div>
          <div class="mt-[4px] flex items-center pl-px"><span class="w-[80px]">Position:</span><div class="flex h-[26px] w-[416px] items-center justify-between rounded border border-[#cfd0d2] bg-gradient-to-b from-[#f2f2f2] to-[#e6e6e6] pr-[7px] pl-[15px]"><span class="flex items-center gap-[4px]"><svg class="h-4 w-5" viewBox="0 0 20 16"><path d="M.8 1h13v13.500H.8z" fill="none" stroke="#98989a" stroke-width="1.500"/><path d="M16.500.5H20v15h-3.500z" fill="url(#rain)"/></svg>Right</span><svg class="h-[5px] w-[9px] text-black"><use href="#dd"/></svg></div></div>
          <div class="mt-2 flex items-center pl-px"><span class="w-[80px]">Text color:</span><div class="flex h-[26px] w-[416px] items-center justify-between rounded border border-[#cfd0d2] bg-gradient-to-b from-[#f2f2f2] to-[#e6e6e6] pr-[7px] pl-[15px] tracking-[0.05px]">From theme<svg class="h-[5px] w-[9px] text-black"><use href="#dd"/></svg></div></div>
        </fieldset>
        <div class="mt-[15px] flex h-[33px] items-center bg-[#dee8f4] pb-[2px] pl-[9px] text-[16.8px] tracking-[-0.1px]"><svg class="mr-[16px] h-[11px] w-[7px]" viewBox="0 0 7 11"><path d="M.6.8L6 5.500.6 10.200z" fill="#fff" stroke="#8a8a8a"/></svg>Number Format</div>
        <div class="mt-[3px] flex h-[33px] items-center bg-[#dee8f4] pb-[2px] pl-[9px] text-[16.8px] tracking-[-0.1px]"><svg class="mr-[16px] h-[11px] w-[7px]" viewBox="0 0 7 11"><path d="M.6.8L6 5.500.6 10.200z" fill="#fff" stroke="#8a8a8a"/></svg>Plot Array</div>
        <div class="mt-[3px] flex h-[33px] items-center bg-[#dee8f4] pb-[2px] pl-[9px] text-[16.8px] tracking-[-0.12px]"><svg class="mr-[16px] h-[11px] w-[7px]" viewBox="0 0 7 11"><path d="M.6.8L6 5.500.6 10.200z" fill="#fff" stroke="#8a8a8a"/></svg>Window Settings</div>
      </section>

      <div class="ml-[6px] flex w-[941px] flex-col">
        <div class="flex h-[766px]">

          <!-- Graphics -->
          <section class="flex w-[608px] shrink-0 flex-col border border-[#9dccf3]">
            <div class="flex h-[37px] shrink-0 items-end text-[16.8px]">
              <div class="h-px w-[5px] bg-[#d3d4d8]"></div>
              <div class="h-[31px] w-[78px] border border-b-0 border-[#d3d4d8] text-center leading-[32px] tracking-[-0.1px] text-[#2490e8]">Graphics</div>
              <div class="h-px w-[10px] bg-[#d3d4d8]"></div>
              <div class="flex h-[31px] w-[183px] items-center border-b border-[#d3d4d8] bg-[#ebebec] pt-px pl-[5px] tracking-[-0.06px]">Convergence Plot 1<svg class="mr-[8px] mb-1 ml-auto h-[11px] w-3 text-[#cdd0d8]"><use href="#cross"/></svg></div>
              <div class="flex h-[31px] flex-1 items-center justify-end border-b border-[#d3d4d8] pt-[3px] pr-[4px] text-[#338bcb]"><svg class="mb-[2px] h-[6px] w-[11px]"><use href="#dd"/></svg><svg class="ml-[7px] h-[13px] w-[10px]"><use href="#pin"/></svg></div>
            </div>
            <div class="flex h-[35px] shrink-0 items-center pt-[2px] pl-[9px] text-black">
              <svg class="h-[15px] w-[15px]"><use href="#zin"/></svg>
              <svg class="ml-[11px] h-[15px] w-[15px]"><use href="#zout"/></svg>
              <svg class="ml-[8px] h-[17px] w-5"><use href="#zbox"/></svg>
              <svg class="ml-[8px] h-[5px] w-[9px]"><use href="#dd"/></svg>
              <svg class="ml-[11px] h-[19px] w-[19px]"><use href="#ext"/></svg>
              <div class="ml-[10px] h-5 w-px bg-[#d3d4d8]"></div>
              <svg class="ml-[6px] h-[18px] w-[21px]"><use href="#axes"/></svg>
              <svg class="ml-[7px] h-[5px] w-[9px]"><use href="#dd"/></svg>
              <div class="ml-[15px] h-5 w-px bg-[#d3d4d8]"></div>
              <div class="ml-[3px] flex h-6 w-6 items-center justify-center rounded-[3px] border border-[#2a8fe4] bg-[#a3d1f8]"><svg class="h-4 w-4"><use href="#grid"/></svg></div>
              <div class="ml-[2px] flex h-6 w-6 items-center justify-center rounded-[3px] border border-[#2a8fe4] bg-[#a3d1f8]"><svg class="h-4 w-4"><use href="#legend"/></svg></div>
              <svg class="ml-[6px] h-[17px] w-[17px]"><use href="#aperture"/></svg>
              <svg class="ml-[9px] h-[5px] w-[9px]"><use href="#dd"/></svg>
              <svg class="ml-[13px] h-4 w-[17px]"><use href="#cam"/></svg>
              <svg class="ml-[9px] h-[18px] w-[17px]"><use href="#printer"/></svg>
            </div>
            <svg class="h-[692px] w-[606px] bg-white font-['DejaVu_Sans'] text-[15.100px]" viewBox="967 259 606 692">
              <svg x="1548" y="265" width="20" height="18"><use href="#logo"/></svg>
              <text x="1242" y="290.500" text-anchor="middle" textLength="258">Surface: Velocity magnitude (m/s)</text>
              <text x="970" y="307" font-size="13">m</text><text x="1448" y="945.500" font-size="13">m</text>
              <rect x="1026" y="557" width="433" height="43" fill="url(#flowProfile)"/>
              <path d="M1026 557.500h433M1026 599.500h433" stroke="#111" stroke-width="1"/>
              <path d="M1026 301.500h433v623.500h-433zM1086 302v6.500M1192 302v6.500M1298 302v6.500M1404 302v6.500M1086 918v7M1192 918v7M1298 918v7M1404 918v7M1026 314h7M1026 367h7M1026 419h7M1026 472h7M1026 525h7M1026 578h7M1026 631h7M1026 684h7M1026 737h7M1026 790h7M1026 843h7M1026 895h7M1452 314h7M1452 367h7M1452 419h7M1452 472h7M1452 525h7M1452 578h7M1452 631h7M1452 684h7M1452 737h7M1452 790h7M1452 843h7M1452 895h7" fill="none" stroke="#000" stroke-opacity=".52" stroke-width="1.700"/>
              <g text-anchor="end"><text x="1020" y="372.500">0.004</text><text x="1020" y="424.500">0.003</text><text x="1020" y="477.500">0.002</text><text x="1020" y="530.500">0.001</text><text x="1020" y="583.500">0</text><text x="1020" y="636.500">-0.001</text><text x="1020" y="689.500">-0.002</text><text x="1020" y="742.500">-0.003</text><text x="1020" y="795.500">-0.004</text><text x="1020" y="848.500">-0.005</text><text x="1020" y="900.500">-0.006</text></g>
              <g text-anchor="middle"><text x="1086" y="945.500">0.026</text><text x="1192" y="945.500">0.028</text><text x="1298" y="945.500">0.03</text><text x="1404" y="945.500">0.032</text></g>
              <rect x="1485.500" y="339" width="18.500" height="579" fill="url(#jet)" stroke="#000" stroke-opacity=".6" stroke-width="1.500"/>
              <path d="M1485 392h4M1500 392h4M1485 467h4M1500 467h4M1485 542h4M1500 542h4M1485 617h4M1500 617h4M1485 692h4M1500 692h4M1485 767h4M1500 767h4M1485 842h4M1500 842h4" stroke="#111" stroke-width="1"/>
              <text x="1514" y="397.500">14</text><text x="1514" y="472.500">12</text><text x="1514" y="547.500">10</text><text x="1514" y="622.500">8</text><text x="1514" y="697.500">6</text><text x="1514" y="772.500">4</text><text x="1514" y="847.500">2</text><text x="1514" y="922.500">0</text>
              <text x="1504.500" y="328.500">×10</text><text x="1536" y="321" font-size="10">−4</text>
            </svg>
          </section>

          <!-- Add Material -->
          <section class="ml-[6px] w-[327px] border border-[#d3d4d8] pl-[5px]">
            <div class="flex h-[42px] items-center">
              <h2 class="ml-[5px] w-[265px] pt-[1px] text-[25px] font-light tracking-[0.08px] text-[#2b579a]">Add Material</h2>
              <svg class="mb-px h-[6px] w-[11px] text-[#555]"><use href="#dd"/></svg>
              <svg class="ml-[7px] h-[13px] w-[10px] text-[#555]"><use href="#pin"/></svg>
              <svg class="ml-[7px] h-3 w-3 text-[#444]"><use href="#cross"/></svg>
            </div>
            <div class="flex h-[19px] items-center pl-[2px]"><svg class="h-[17px] w-[17px]"><use href="#globe"/></svg><span class="ml-[7px] tracking-[0.18px]">Add to Global Materials</span><svg class="ml-[8px] h-[5px] w-[9px] text-black"><use href="#dd"/></svg></div>
            <div class="mt-[3px] flex h-[24px] items-center pl-[5px]"><svg class="h-3 w-3" viewBox="0 0 12 12"><path d="M0 6h12M6 0v12" stroke="#338bcb"/></svg><span class="ml-[9px] tracking-[0.18px]">Add to Component</span><svg class="ml-[8px] h-[5px] w-[9px] text-black"><use href="#dd"/></svg></div>
            <div class="mt-[4px] flex items-center">
              <div class="h-6 w-[231px] border-2 border-[#d2d3d6] bg-white"></div>
              <div class="ml-[7px] h-[26px] w-[78px] rounded border-2 border-[#d4d5d7] bg-[#ececec] text-center leading-[22px]">Search</div>
            </div>
            <div id="material-tree" class="mt-[5px] ml-px h-[632px] w-[313px] border border-[#d3d4d8] bg-white pr-px"></div>
          </section>
        </div>

        <!-- Messages -->
        <section class="mt-[6px] h-[191px] border border-[#d3d4d8]">
          <div class="flex h-[37px] items-end text-[16.8px]">
            <div class="h-px w-[5px] bg-[#d3d4d8]"></div>
            <div class="flex h-[31px] w-[109px] items-center border border-b-0 border-[#d3d4d8] pt-[2px] pl-[5px] tracking-[-0.25px] text-[#2b579a]">Messages<svg class="mr-[8px] mb-1 ml-auto h-[11px] w-3 text-[#c8cad0]"><use href="#cross"/></svg></div>
            <div class="h-px w-[10px] bg-[#d3d4d8]"></div>
            <div class="h-[31px] w-[75px] border-b border-[#d3d4d8] bg-[#ebebec] text-center leading-[32px] tracking-[-0.1px]">Progress</div>
            <div class="h-px w-[10px] bg-[#d3d4d8]"></div>
            <div class="h-[31px] w-[38px] border-b border-[#d3d4d8] bg-[#ebebec] text-center leading-[32px]">Log</div>
            <div class="flex h-[31px] flex-1 items-center justify-end border-b border-[#d3d4d8] pt-[4px] pr-[4px] text-[#555]"><svg class="mb-[2px] h-[6px] w-[11px]"><use href="#dd"/></svg><svg class="ml-[7px] h-[13px] w-[10px]"><use href="#pin"/></svg></div>
          </div>
          <div class="flex h-[35px] items-center pt-[3px] pl-[10px]"><svg class="h-[19px] w-[14px]"><use href="#broom"/></svg><div class="ml-[6px] flex h-6 w-6 items-center justify-center rounded-[3px] border border-[#2a8fe4] bg-[#a3d1f8]"><svg class="h-[15px] w-[18px]"><use href="#mail"/></svg></div></div>
          <div class="ml-[5px] grid h-[111px] w-[929px] grid-cols-[minmax(0,1fr)_20px] grid-rows-[minmax(0,1fr)_20px] border border-[#d3d4d8]">
            <div class="flex flex-col justify-end overflow-hidden pl-[3px] text-[14.2px] leading-[20px] text-black *:shrink-0 *:translate-y-px">
              <div>[Sep 17, 2025, 2:19 PM] Complete mesh consists of 251170 domain elements and 8960 boundary elements.</div>
              <div class="tracking-[0.055px]">[Sep 17, 2025, 2:19 PM] Saved file: \\wsl.localhost\Ubuntu\home\jonathan\linux-git-repositories\EEMN21\lab\SIM\channel.mph (6692 KB)</div>
              <div>[Sep 17, 2025, 2:21 PM] Number of degrees of freedom solved for: 416869 (plus 1 internal DOFs).</div>
              <div>[Sep 17, 2025, 2:21 PM] Solution time (Study 1): 33 s.</div>
              <div class="tracking-[0.055px]">[Sep 17, 2025, 2:21 PM] Saved file: \\wsl.localhost\Ubuntu\home\jonathan\linux-git-repositories\EEMN21\lab\SIM\channel.mph (20 MB)</div>
            </div>
            <div class="flex flex-col items-center bg-[#fbfbfb]"><div class="flex h-[21px] w-full items-center justify-center bg-[#f5f5f6]"><svg class="h-[6px] w-[10px]" viewBox="0 0 10 6"><path d="M1 5l4-4 4 4" fill="none" stroke="#c4c4c6" stroke-width="1.300"/></svg></div><div class="mt-[21px] h-[21px] w-full bg-[#e3e3e5]"></div><div class="mt-auto flex h-[21px] w-full items-center justify-center bg-[#f5f5f6]"><svg class="h-[6px] w-[10px]" viewBox="0 0 10 6"><path d="M1 1l4 4 4-4" fill="none" stroke="#c4c4c6" stroke-width="1.300"/></svg></div></div>
            <div class="flex items-center bg-[#fbfbfb]"><div class="flex h-full w-[21px] items-center justify-center bg-[#f5f5f6]"><svg class="h-[10px] w-[6px]" viewBox="0 0 6 10"><path d="M5 1L1 5l4 4" fill="none" stroke="#c4c4c6" stroke-width="1.300"/></svg></div><div class="h-full w-[855px] bg-[#e3e3e5]"></div><div class="ml-auto flex h-full w-[21px] items-center justify-center bg-[#f5f5f6]"><svg class="h-[10px] w-[6px]" viewBox="0 0 6 10"><path d="M1 1l4 4-4 4" fill="none" stroke="#c4c4c6" stroke-width="1.300"/></svg></div></div>
            <div class="bg-[#efeff0]"></div>
          </div>
        </section>
      </div>
    </div>

    <!-- Status bar -->
    <footer class="mt-[15px] pl-[1053px] text-[14px] tracking-[-0.35px]">1.1 GB | 1.4 GB</footer>
  </main>
  <div class="mt-1 flex h-[2px] shrink-0 bg-[#2a2a2a]"><div class="ml-[960px] w-[43px] bg-[#0b62b5]"></div></div>
</div>

<script>
// Row format: [level, state (1 open, 0 closed, -1 leaf), icon, label, italic tag, selected]
const indent = ['pl-[6px]', 'pl-[31px]', 'pl-[56px]'];
const model = [
  [0,1,'root','channel.mph','(root)'],[1,1,'globe','Global Definitions'],[2,-1,'pi','Parameters 1'],[2,-1,'dmi','Default Model Inputs'],[2,-1,'matc','Materials'],
  [1,1,'comp','Component 1','(comp1)'],[2,0,'defs3','Definitions'],[2,0,'geom','Geometry 1'],[2,0,'mat','Materials'],[2,0,'flow','Laminar Flow','(spf)'],[2,-1,'meshg','Mesh 1'],
  [1,1,'study','Study 1'],[2,-1,'step','Step 1: Stationary'],[2,0,'solver','Solver Configurations'],
  [1,1,'results','Results'],[2,0,'dsets','Datasets'],[2,-1,'#','Derived Values'],[2,-1,'table','Tables'],[2,0,'sq','Velocity (spf)','',1],[2,0,'press','Pressure (spf)'],[2,-1,'exportp','Export'],[2,-1,'report','Reports']
];
const materials = [
  [0,1,'rmat','Recent Materials'],[1,-1,'mat','Water'],[0,0,'builtin','Built-in'],[0,0,'acdc','AC/DC'],[0,0,'bio','Bioheat'],[0,0,'build','Building'],
  [0,1,'liq','Liquids and Gases'],[1,0,'liq','Gases'],[1,1,'liq','Liquids'],
  ...['Engine oil','Ethanol','Diethyl ether','Ethylene glycol','Gasoline','Glycerol','Heptane','Mercury','Toluene','Transformer oil'].map(n => [2,-1,'mat',n]),
  [2,-1,'mat','Water','',1],[2,-1,'mat','R-134A (C2H2F4)'],[2,-1,'mat','R-22 (CHClF2)'],
  [0,0,'magnet','Nonlinear Magnetic'],[0,0,'optic','Optical'],[0,0,'rf','RF'],[0,0,'thermo','Thermoelectric'],[0,0,'userlib','User-Defined Library']
];
const big = ['matc','geom','flow','meshg','study','results','rmat','builtin','acdc','bio','build','liq','magnet','optic','rf','thermo','userlib'];
const glyph = n => n === '#'
  ? '<div class="text-center text-[7.500px] leading-[8px] font-semibold text-[#b153a0]">8.85<br>e-12</div>'
  : `<svg class="${big.includes(n) ? 'h-5 w-5' : n === 'sq' ? 'h-4 w-4' : 'h-[17px] w-[17px]'}"><use href="#${n}"/></svg>`;
const arrow = s => s === 1 ? '<svg class="h-[6px] w-[10px]"><use href="#open"/></svg>' : s === 0 ? '<svg class="h-[10px] w-[6px]"><use href="#shut"/></svg>' : '';
const row = ([lv, st, ic, tx, it, sel]) => `
  <div class="flex h-[22px] items-center ${indent[lv]} ${sel ? 'bg-[#dadadc]' : ''}">
    <div class="flex w-[10px] justify-center">${arrow(st)}</div>
    <div class="mx-[9px] flex w-5 shrink-0 justify-center">${glyph(ic)}</div>
    <div class="-ml-[2px] translate-y-[0.5px] tracking-[0.03px]">${tx}${it ? ` <i class="tracking-[0.25px]">${it}</i>` : ''}</div>
  </div>`;
document.getElementById('model-tree').innerHTML = model.map(row).join('');
document.getElementById('material-tree').innerHTML = materials.map(row).join('');
</script>
</body>
</html>
